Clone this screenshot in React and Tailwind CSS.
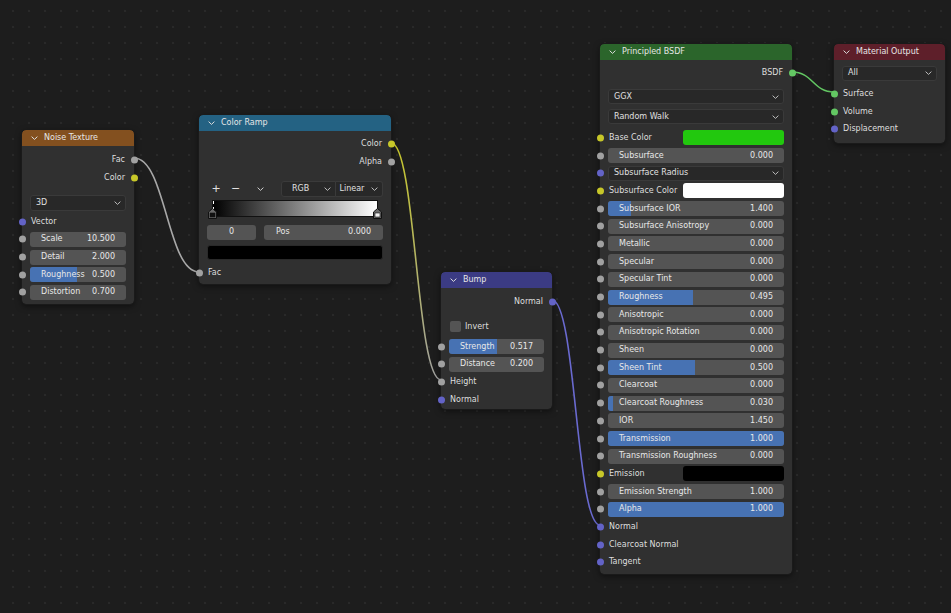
import React from "react";

const SOCK = {
  g: "bg-[#a1a1a1]",
  y: "bg-[#c7c729]",
  p: "bg-[#6363c7]",
  n: "bg-[#63c763]",
};

const Socket = ({ c, right }) => (
  <span
    className={`absolute top-1/2 -translate-y-1/2 w-[7px] h-[7px] rounded-full ${SOCK[c]} ${
      right ? "right-[-3.5px]" : "left-[-3.5px]"
    }`}
  />
);

const Chev = ({ className = "" }) => (
  <svg width="7" height="4" viewBox="0 0 7 4" className={className}>
    <path d="M0.6 0.6 L3.5 3.4 L6.4 0.6" fill="none" stroke="currentColor" strokeWidth="1" />
  </svg>
);

// one socket row, 17.7px like blender at this zoom
const Row = ({ sock, right, className = "", children }) => (
  <div className={`relative h-[17.7px] flex items-center ${className}`}>
    {sock && <Socket c={sock} right={right} />}
    {children}
  </div>
);

const Out = ({ sock, label }) => (
  <Row sock={sock} right className="justify-end pr-[9px]">
    <span>{label}</span>
  </Row>
);

const In = ({ sock, label }) => (
  <Row sock={sock} className="pl-[9px]">
    <span>{label}</span>
  </Row>
);

const Field = ({ label, value, fill = 0 }) => (
  <div className="relative flex-1 h-[15px] rounded-[3px] bg-[#545454] overflow-hidden flex items-center justify-between px-[11px] text-[#e8e8e8]">
    {fill > 0 && (
      <div className="absolute left-0 top-0 bottom-0 bg-[#4772b3]" style={{ width: `${fill * 100}%` }} />
    )}
    <span className="relative">{label}</span>
    <span className="relative">{value}</span>
  </div>
);

const Drop = ({ label, className = "" }) => (
  <div
    className={`h-[15px] rounded-[3px] bg-[#282828] border border-[#3a3a3a] flex items-center justify-between pl-[5px] pr-[4px] text-[#e0e0e0] ${className}`}
  >
    <span>{label}</span>
    <Chev className="text-[#bdbdbd]" />
  </div>
);

const Node = ({ pos, head, title, children }) => (
  <div className={`absolute ${pos} rounded-[4px] bg-[#303030] shadow-[0_2px_6px_rgba(0,0,0,0.55)] outline outline-1 outline-[#1a1a1a]`}>
    <div className={`h-[16px] rounded-t-[4px] ${head} flex items-center pl-[9px] gap-[6px] text-[#e6e6e6]`}>
      <Chev className="text-[#dddddd]" />
      <span>{title}</span>
    </div>
    {children}
  </div>
);

const Marker = ({ fill }) => (
  <svg width="9" height="11" viewBox="0 0 9 11">
    <path d="M0.5 4 L4.5 0.5 L8.5 4 L8.5 10.5 L0.5 10.5 Z" fill="#6a6a6a" stroke="#111" strokeWidth="1" />
    <rect x="2" y="5" width="5" height="4" fill={fill} stroke="#111" strokeWidth="0.6" />
  </svg>
);

const principled = [
  { k: "c", label: "Base Color", s: "y", sw: "bg-[#22c80e]" },
  { k: "f", label: "Subsurface", v: "0.000", f: 0 },
  { k: "d", label: "Subsurface Radius", s: "p" },
  { k: "c", label: "Subsurface Color", s: "y", sw: "bg-[#ffffff]" },
  { k: "f", label: "Subsurface IOR", v: "1.400", f: 0.13 },
  { k: "f", label: "Subsurface Anisotropy", v: "0.000", f: 0 },
  { k: "f", label: "Metallic", v: "0.000", f: 0 },
  { k: "f", label: "Specular", v: "0.000", f: 0 },
  { k: "f", label: "Specular Tint", v: "0.000", f: 0 },
  { k: "f", label: "Roughness", v: "0.495", f: 0.485 },
  { k: "f", label: "Anisotropic", v: "0.000", f: 0 },
  { k: "f", label: "Anisotropic Rotation", v: "0.000", f: 0 },
  { k: "f", label: "Sheen", v: "0.000", f: 0 },
  { k: "f", label: "Sheen Tint", v: "0.500", f: 0.495 },
  { k: "f", label: "Clearcoat", v: "0.000", f: 0 },
  { k: "f", label: "Clearcoat Roughness", v: "0.030", f: 0.03 },
  { k: "f", label: "IOR", v: "1.450", f: 0 },
  { k: "f", label: "Transmission", v: "1.000", f: 1 },
  { k: "f", label: "Transmission Roughness", v: "0.000", f: 0 },
  { k: "c", label: "Emission", s: "y", sw: "bg-[#000000]" },
  { k: "f", label: "Emission Strength", v: "1.000", f: 0 },
  { k: "f", label: "Alpha", v: "1.000", f: 1 },
  { k: "i", label: "Normal", s: "p" },
  { k: "i", label: "Clearcoat Normal", s: "p" },
  { k: "i", label: "Tangent", s: "p" },
];

export default function App() {
  return (
    <div className="relative w-full h-screen overflow-hidden bg-[#1d1d1d] bg-[radial-gradient(circle,#292929_1px,transparent_1.6px)] bg-[length:16px_16px] bg-[position:5px_3px] font-['DejaVu_Sans',sans-serif] text-[8px] leading-none text-[#dedede]">
      {/* links */}
      <svg className="absolute inset-0 w-full h-full" width="951" height="613">
        <defs>
          <linearGradient id="rampLink" gradientUnits="userSpaceOnUse" x1="391" y1="143" x2="441" y2="380">
            <stop offset="0" stopColor="#c7c729" />
            <stop offset="1" stopColor="#a1a1a1" />
          </linearGradient>
        </defs>
        <path d="M134 158 C166 158 167 272 199 272" fill="none" stroke="#a8a8a8" strokeWidth="1.6" />
        <path d="M391 143 C416 143 416 380 441 380" fill="none" stroke="url(#rampLink)" strokeWidth="1.6" />
        <path d="M552 300 C576 300 576 525 600 525" fill="none" stroke="#6a6ad0" strokeWidth="1.6" />
        <path d="M792 72 C813 72 813 92 834 92" fill="none" stroke="#63c763" strokeWidth="1.6" />
      </svg>

      {/* Noise Texture */}
      <Node pos="left-[22px] top-[130px] w-[112px]" head="bg-[#83501f]" title="Noise Texture">
        <div className="pt-[5px] pb-[3px]">
          <Out sock="g" label="Fac" />
          <Out sock="y" label="Color" />
          <div className="px-2 mt-[8.5px]">
            <Drop label="3D" className="h-[16px]" />
          </div>
          <div className="mt-[2px]">
            <In sock="p" label="Vector" />
          </div>
          <Row sock="g" className="px-2">
            <Field label="Scale" value="10.500" />
          </Row>
          <Row sock="g" className="px-2">
            <Field label="Detail" value="2.000" />
          </Row>
          <Row sock="g" className="px-2">
            <Field label="Roughness" value="0.500" fill={0.49} />
          </Row>
          <Row sock="g" className="px-2">
            <Field label="Distortion" value="0.700" />
          </Row>
        </div>
      </Node>

      {/* Color Ramp */}
      <Node pos="left-[199px] top-[115px] w-[192px]" head="bg-[#246283]" title="Color Ramp">
        <div className="pt-[4px] pb-[2px]">
          <Out sock="y" label="Color" />
          <Out sock="g" label="Alpha" />
          <div className="mt-[10.5px] h-[16px] px-2 flex items-center text-[#e0e0e0]">
            <span className="w-[18px] text-center text-[11px]">+</span>
            <span className="w-[21px] text-center text-[11px]">−</span>
            <span className="w-[28px] flex justify-center">
              <Chev className="text-[#cfcfcf]" />
            </span>
            <div className="ml-auto flex w-[102px] h-[16px]">
              <div className="flex-1 rounded-l-[3px] bg-[#282828] border border-[#3a3a3a] flex items-center justify-between pl-[10px] pr-[4px]">
                <span>RGB</span>
                <Chev className="text-[#bdbdbd]" />
              </div>
              <div className="flex-1 rounded-r-[3px] bg-[#282828] border border-l-0 border-[#3a3a3a] flex items-center justify-between pl-[4px] pr-[4px]">
                <span>Linear</span>
                <Chev className="text-[#bdbdbd]" />
              </div>
            </div>
          </div>
          <div className="relative mx-[13px] mt-[3px] h-[17px] border border-[#111] bg-[linear-gradient(to_right,#000000,#ffffff)]">
            <div className="absolute left-[0px] top-0 h-[9px] border-l border-dashed border-white" />
            <div className="absolute left-[-5px] top-[7px]">
              <Marker fill="#111111" />
            </div>
            <div className="absolute right-[-5px] top-[7px]">
              <Marker fill="#f2f2f2" />
            </div>
          </div>
          <div className="mt-[8px] px-2 flex gap-[8px] h-[15px] text-[#e8e8e8]">
            <div className="w-[49px] rounded-[3px] bg-[#545454] flex items-center justify-center">0</div>
            <div className="flex-1 rounded-[3px] bg-[#545454] flex items-center justify-between px-[12px]">
              <span>Pos</span>
              <span>0.000</span>
            </div>
          </div>
          <div className="mt-[5.5px] mx-2 h-[15px] rounded-[3px] bg-[#000000] border border-[#2a2a2a]" />
          <div className="mt-[4px]">
            <In sock="g" label="Fac" />
          </div>
        </div>
      </Node>

      {/* Bump */}
      <Node pos="left-[441px] top-[272px] w-[111px]" head="bg-[#3b3b83]" title="Bump">
        <div className="pt-[5px] pb-[1px]">
          <Out sock="p" label="Normal" />
          <Row className="mt-[7px] pl-[9px] gap-[4px]">
            <span className="w-[11px] h-[11px] rounded-[2px] bg-[#545454]" />
            <span>Invert</span>
          </Row>
          <Row sock="g" className="mt-[2.3px] px-2">
            <Field label="Strength" value="0.517" fill={0.5} />
          </Row>
          <Row sock="g" className="px-2">
            <Field label="Distance" value="0.200" />
          </Row>
          <In sock="g" label="Height" />
          <In sock="p" label="Normal" />
        </div>
      </Node>

      {/* Principled BSDF */}
      <Node pos="left-[600px] top-[44px] w-[192px]" head="bg-[#2b652b]" title="Principled BSDF">
        <div className="pt-[4px] pb-[3px]">
          <Out sock="n" label="BSDF" />
          <div className="px-2 mt-[7.5px]">
            <Drop label="GGX" />
          </div>
          <div className="px-2 mt-[5px]">
            <Drop label="Random Walk" />
          </div>
          <div className="mt-[4.8px]">
            {principled.map((r) => {
              if (r.k === "f")
                return (
                  <Row key={r.label} sock="g" className="px-2">
                    <Field label={r.label} value={r.v} fill={r.f} />
                  </Row>
                );
              if (r.k === "c")
                return (
                  <Row key={r.label} sock={r.s} className="pl-[9px] pr-2">
                    <span>{r.label}</span>
                    <span className={`ml-auto w-[101px] h-[15px] rounded-[3px] ${r.sw}`} />
                  </Row>
                );
              if (r.k === "d")
                return (
                  <Row key={r.label} sock={r.s} className="px-2">
                    <Drop label={r.label} className="flex-1" />
                  </Row>
                );
              return <In key={r.label} sock={r.s} label={r.label} />;
            })}
          </div>
        </div>
      </Node>

      {/* Material Output */}
      <Node pos="left-[834px] top-[44px] w-[111px]" head="bg-[#5e1f2a]" title="Material Output">
        <div className="pb-[5px]">
          <div className="px-2 mt-[5.5px]">
            <Drop label="All" />
          </div>
          <div className="mt-[4.5px]">
            <In sock="n" label="Surface" />
            <In sock="n" label="Volume" />
            <In sock="p" label="Displacement" />
          </div>
        </div>
      </Node>
    </div>
  );
}
